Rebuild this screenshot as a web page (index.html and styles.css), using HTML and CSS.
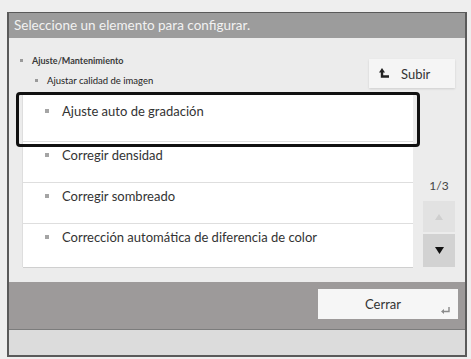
FILE: index.html
```html
<!DOCTYPE html>
<html lang="es">
<head>
    <meta charset="UTF-8">
    <title>Ajustar calidad de imagen</title>
    <link rel="stylesheet" href="styles.css">
</head>
<body>
    <div class="frame">
        <div class="title-bar">Seleccione un elemento para configurar.</div>

        <div class="main">
            <div class="head">
                <div class="crumbs">
                    <div class="crumb"><span class="dot"></span>Ajuste/Mantenimiento</div>
                    <div class="crumb sub"><span class="dot"></span>Ajustar calidad de imagen</div>
                </div>
                <button class="up-btn">
                    <svg width="11" height="11" viewBox="0 0 11 11">
                        <path d="M3 4 V8.5 H10" fill="none" stroke="#222" stroke-width="2.4"/>
                        <path d="M0 4.5 L3 0 L6 4.5 Z" fill="#222"/>
                    </svg>
                    Subir
                </button>
            </div>

            <div class="body-row">
                <div class="list">
                    <div class="row first"><span class="dot"></span>Ajuste auto de gradación</div>
                    <div class="row"><span class="dot"></span>Corregir densidad</div>
                    <div class="row"><span class="dot"></span>Corregir sombreado</div>
                    <div class="row last"><span class="dot"></span>Corrección automática de diferencia de color</div>
                    <div class="focus"></div>
                </div>
                <div class="side">
                    <div class="page">1/3</div>
                    <button class="scroll up">
                        <svg width="8" height="6" viewBox="0 0 8 6"><path d="M0 6 L4 0 L8 6 Z" fill="#cfcfcf"/></svg>
                    </button>
                    <button class="scroll down">
                        <svg width="9" height="7" viewBox="0 0 9 7"><path d="M0 0 L9 0 L4.5 7 Z" fill="#111"/></svg>
                    </button>
                </div>
            </div>
        </div>

        <div class="foot">
            <button class="close-btn">
                Cerrar
                <svg class="enter" width="9" height="7" viewBox="0 0 9 7">
                    <path d="M8 0 V4.5 H2" fill="none" stroke="#8a8a8a" stroke-width="1.4"/>
                    <path d="M0 4.5 L3 2 L3 7 Z" fill="#8a8a8a"/>
                </svg>
            </button>
        </div>
        <div class="strip"></div>
    </div>
</body>
</html>
```

FILE: styles.css
```css
body {
    margin: 0;
    background-color: #eeeeee;
    font-family: Lato, "Liberation Sans", sans-serif;
    color: #333;
}

.frame {
    margin: 12px 0 0 7px;
    width: 460px;
    height: 345px;
    box-sizing: border-box;
    border: 2px solid #5a5a5a;
    border-top-width: 1px;
    background-color: #ececec;
    display: flex;
    flex-direction: column;
}

.title-bar {
    height: 25px;
    line-height: 25px;
    padding-left: 5px;
    background-color: #9c9c9c;
    color: #f2f2f2;
    font-size: 13.5px;
}

.main {
    padding: 0 10px 0 11px;
    height: 244px;
}

.head {
    display: flex;
    justify-content: space-between;
    height: 55px;
}

.crumbs {
    padding-top: 16px;
    font-size: 9px;
    font-weight: bold;
    color: #3a3a3a;
}

.crumb {
    display: flex;
    align-items: center;
    height: 12px;
}

.crumb.sub {
    margin-top: 8px;
    padding-left: 15px;
    font-weight: normal;
    font-size: 9.5px;
    color: #222;
}

.crumb .dot {
    width: 3px;
    height: 3px;
    background-color: #9a9a9a;
    margin-right: 9px;
}

.up-btn {
    margin-top: 21px;
    width: 86px;
    height: 29px;
    border: none;
    background-color: #f5f5f5;
    box-shadow: 0 1px 2px rgba(0,0,0,0.12);
    font-family: inherit;
    font-size: 13px;
    color: #333;
    display: flex;
    align-items: center;
    padding-left: 10px;
    gap: 11px;
}

.body-row {
    display: flex;
    gap: 10px;
}

.list {
    position: relative;
    flex: 1;
    margin-left: 3px;
    height: 174px;
    background-color: #ffffff;
    box-shadow: 0 1px 0 #cfcfcf, -1px 0 0 #dedede;
}

.row {
    display: flex;
    height: 41px;
    padding: 3px 0 0 22px;
    box-sizing: border-box;
    align-items: flex-start;
    line-height: 20px;
    font-size: 13px;
    color: #333;
    border-bottom: 1px solid #dedede;
}

.row.first {
    height: 49px;
    padding-top: 8px;
}

.row.last {
    height: 43px;
    border-bottom: none;
}

.row .dot {
    width: 4px;
    height: 4px;
    margin: 8px 13px 0 0;
    background-color: #a5a5a5;
}

.focus {
    position: absolute;
    left: -7px;
    top: -1px;
    width: 404px;
    height: 55px;
    box-sizing: border-box;
    border: 3px solid #111;
    border-radius: 4px;
}

.side {
    width: 32px;
    display: flex;
    flex-direction: column;
    justify-content: flex-end;
    align-items: center;
    gap: 2px;
}

.page {
    font-size: 12px;
    color: #444;
    margin-bottom: 6px;
}

.scroll {
    width: 32px;
    height: 31px;
    border: none;
    padding: 0;
    display: flex;
    align-items: center;
    justify-content: center;
}

.scroll.up {
    background-color: #e2e2e2;
}

.scroll.down {
    height: 33px;
    background-color: #d2d2d2;
}

.foot {
    height: 48px;
    background-color: #9d9a9a;
    border-bottom: 1px solid #7c7c7c;
    display: flex;
    justify-content: flex-end;
    padding: 7px 7px 0 0;
    box-sizing: border-box;
}

.close-btn {
    position: relative;
    width: 140px;
    height: 30px;
    border: none;
    background-color: #f6f6f6;
    font-family: inherit;
    font-size: 13px;
    color: #333;
    padding: 0 10px 0 0;
}

.close-btn .enter {
    position: absolute;
    right: 8px;
    bottom: 5px;
}

.strip {
    flex: 1;
    background-color: #dcdcdc;
}
```
